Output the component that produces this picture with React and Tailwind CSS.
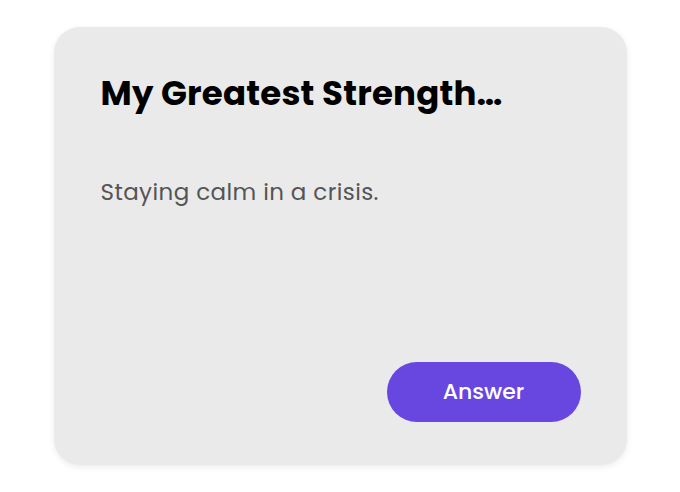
export default function App() {
  return (
    <div
      className="w-[680px] h-[492px] bg-white flex items-start justify-center pt-[27px]"
      style={{ fontFamily: "Poppins, Inter, 'Noto Sans', sans-serif" }}
    >
      <div className="w-[573px] h-[438px] bg-[#eaeaea] rounded-[26px] shadow-[0_2px_6px_rgba(0,0,0,0.08)] flex flex-col pl-[47px] pr-[46px] pt-[46px] pb-[43px]">
        <h1 className="text-[34px] leading-[40px] font-bold text-black tracking-[0.2px]">
          My Greatest Strength…
        </h1>
        <p className="mt-[64px] text-[23px] leading-[30px] text-[#555555] tracking-[0.4px]">
          Staying calm in a crisis.
        </p>
        <div className="flex-1" />
        <div className="flex justify-end">
          <button className="w-[194px] h-[60px] pb-[2px] rounded-full bg-[#6847e0] text-white text-[22px] font-medium">
            Answer
          </button>
        </div>
      </div>
    </div>
  );
}
